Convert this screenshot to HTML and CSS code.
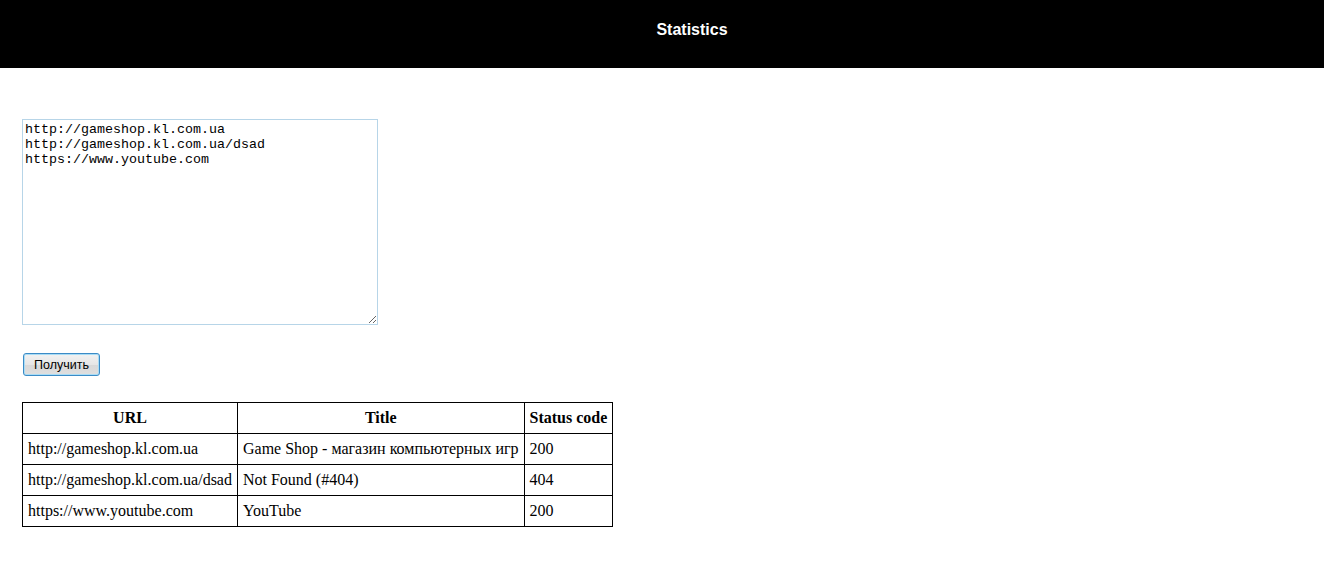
FILE: index.html
```html
<!DOCTYPE html>
<html>
<head>
<meta charset="utf-8">
<link rel="stylesheet" href="styles.css">
</head>
<body>
<header class="topbar"><h1 class="title">Statistics</h1></header>
<main class="content">
<textarea class="urls">http://gameshop.kl.com.ua
http://gameshop.kl.com.ua/dsad
https://www.youtube.com</textarea>
<button class="get-btn">Получить</button>
<table class="stats">
<thead><tr><th>URL</th><th>Title</th><th>Status code</th></tr></thead>
<tbody>
<tr><td>http://gameshop.kl.com.ua</td><td>Game Shop - магазин компьютерных игр</td><td>200</td></tr>
<tr><td>http://gameshop.kl.com.ua/dsad</td><td>Not Found (#404)</td><td>404</td></tr>
<tr><td>https://www.youtube.com</td><td>YouTube</td><td>200</td></tr>
</tbody>
</table>
</main>
</body>
</html>
```
FILE: styles.css
```css
html, body { margin: 0; padding: 0; background: #fff; }
body { font-family: "Liberation Serif", "Times New Roman", serif; color: #000; }
.topbar {
  box-sizing: border-box;
  background: #000;
  height: 68px;
  display: flex;
  align-items: center;
  justify-content: center;
  padding-left: 60px;
  padding-bottom: 9px;
}
.title {
  margin: 0;
  color: #fff;
  font-family: "Liberation Sans", Arial, sans-serif;
  font-size: 16px;
  font-weight: bold;
}
.content { padding: 51px 22px 20px; }
.urls {
  display: block;
  box-sizing: border-box;
  width: 356px;
  height: 206px;
  margin: 0;
  padding: 2px 2px;
  border: 1px solid #b7d5e8;
  font-family: "Liberation Mono", "Courier New", monospace;
  font-size: 13.33px;
  line-height: 15px;
  color: #000;
  resize: both;
  outline: none;
}
.get-btn {
  display: block;
  margin: 28px 0 0 1px;
  box-sizing: border-box;
  width: 77px;
  height: 23px;
  padding: 0;
  border: 1px solid #3b8bc6;
  border-radius: 3px;
  background: linear-gradient(#f2f2f2, #e6e6e6 50%, #d8d8d8 51%, #dfdfdf);
  box-shadow: inset 0 0 0 1px #a9dcf5;
  font-family: "Liberation Sans", Arial, sans-serif;
  font-size: 12.5px;
  color: #000;
}
.stats {
  margin-top: 26px;
  border-collapse: collapse;
  font-size: 16px;
}
.stats th, .stats td {
  border: 1px solid #000;
  padding: 6px 5px;
  line-height: 18px;
  white-space: nowrap;
}
.stats th { font-weight: bold; text-align: center; }
.stats td { text-align: left; }
```
